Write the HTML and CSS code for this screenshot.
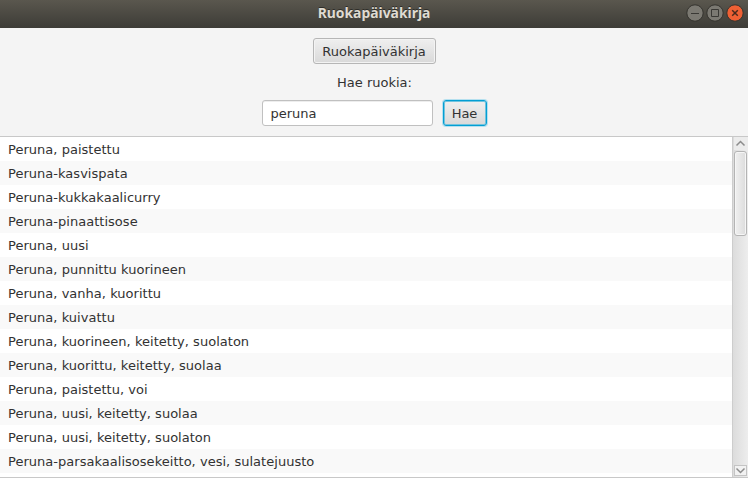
FILE: index.html
```html
<!DOCTYPE html>
<html lang="fi">
<head>
<meta charset="utf-8">
<title>Ruokapäiväkirja</title>
<link rel="stylesheet" href="styles.css">
</head>
<body>
<div class="window">
  <header class="titlebar">
    <h1 class="title">Ruokapäiväkirja</h1>
    <div class="controls">
      <svg class="control" viewBox="0 0 18 18"><circle class="disc" cx="9" cy="9" r="8.2"/><path class="glyph" d="M5 9.5h8"/></svg>
      <svg class="control" viewBox="0 0 18 18"><circle class="disc" cx="9" cy="9" r="8.2"/><path class="glyph" d="M5.5 5.5h7v7h-7z"/></svg>
      <svg class="control" viewBox="0 0 18 18"><circle class="disc disc-close" cx="9" cy="9" r="8.2"/><path class="glyph glyph-close" d="M6.2 6.2l5.6 5.6M11.8 6.2l-5.6 5.6"/></svg>
    </div>
  </header>
  <section class="search">
    <button class="button diary">Ruokapäiväkirja</button>
    <label class="label" for="query">Hae ruokia:</label>
    <div class="search-row">
      <input class="field" id="query" type="text" value="peruna">
      <button class="button focused">Hae</button>
    </div>
  </section>
  <main class="list">
    <ul class="rows">
      <li>Peruna, paistettu</li>
      <li>Peruna-kasvispata</li>
      <li>Peruna-kukkakaalicurry</li>
      <li>Peruna-pinaattisose</li>
      <li>Peruna, uusi</li>
      <li>Peruna, punnittu kuorineen</li>
      <li>Peruna, vanha, kuorittu</li>
      <li>Peruna, kuivattu</li>
      <li>Peruna, kuorineen, keitetty, suolaton</li>
      <li>Peruna, kuorittu, keitetty, suolaa</li>
      <li>Peruna, paistettu, voi</li>
      <li>Peruna, uusi, keitetty, suolaa</li>
      <li>Peruna, uusi, keitetty, suolaton</li>
      <li>Peruna-parsakaalisosekeitto, vesi, sulatejuusto</li>
    </ul>
    <div class="scrollbar">
      <svg class="arrow" viewBox="0 0 13 13"><path d="M2.5 8.5l4-4 4 4"/></svg>
      <div class="thumb"></div>
      <svg class="arrow arrow-down" viewBox="0 0 13 11"><path d="M2.5 3.5l4 4 4-4"/></svg>
    </div>
  </main>
</div>
</body>
</html>
```
FILE: styles.css
```css
* { box-sizing: border-box; }
body {
  margin: 0;
  font: 13px "DejaVu Sans", sans-serif;
  color: #323232;
  background: #f4f4f4;
}
.window {
  width: 748px;
  height: 478px;
  display: flex;
  flex-direction: column;
  overflow: hidden;
}
.titlebar {
  flex: 0 0 28px;
  display: grid;
  grid-template-columns: 1fr auto 1fr;
  align-items: center;
  padding-right: 4px;
  padding-left: 4px;
  background: linear-gradient(#5a574e, #3d3c37);
}
.title {
  grid-column: 2;
  margin: 0;
  padding-bottom: 2px;
  font: bold 13.9px/24px "Noto Sans", sans-serif;
  color: #dfdbd2;
  text-shadow: 0 -1px #2e2d29;
}
.controls {
  display: flex;
  justify-content: flex-end;
  gap: 2px;
  margin-top: -2px;
}
.control { width: 18px; height: 18px; }
.disc { fill: #7b7972; stroke: #34332e; stroke-width: 1; }
.disc-close { fill: #ee6034; }
.glyph { fill: none; stroke: #3a3935; stroke-width: 1; }
.glyph-close { stroke: #4a2a1c; stroke-width: 1.5; }
.search {
  flex: 0 0 108px;
  display: flex;
  flex-direction: column;
  align-items: center;
  padding-top: 10px;
}
.button {
  height: 26px;
  padding: 0 8px;
  border: 1px solid #b6b6b6;
  border-radius: 3px;
  background: linear-gradient(#efefef, #d9d9d9);
  box-shadow: inset 0 0 0 1px #f3f3f3;
  font: inherit;
  color: inherit;
}
.diary { width: 123px; padding: 0; }
.label { height: 16px; margin: 10px 0; padding-left: 1px; line-height: 18px; }
.search-row { display: flex; gap: 10px; }
.field {
  width: 171px;
  height: 26px;
  padding: 0 8px;
  border: 1px solid #c0c0c0;
  border-radius: 3px;
  background: #fff;
  font: inherit;
  color: inherit;
  outline: none;
  box-shadow: inset 0 1px #ededed;
}
.focused {
  width: 44px;
  padding: 0;
  border-color: #039ed3;
  box-shadow: 0 0 0 1px #b5e0ef, inset 0 0 0 1px #70c4df;
}
.list {
  flex: 1;
  min-height: 0;
  display: flex;
  border: solid #c8c8c8;
  border-width: 1px 0;
  background: #fff;
}
.rows { flex: 1; margin: 0; padding: 0; list-style: none; }
.rows li {
  height: 24px;
  padding-left: 8px;
  line-height: 26px;
  letter-spacing: 0.025px;
}
.rows li:nth-child(even) { background: #f9f9f9; }
.scrollbar {
  width: 16px;
  display: flex;
  flex-direction: column;
  align-items: center;
  border-left: 1px solid #cdcdcd;
  background: linear-gradient(to right, #dcdcdc, #ededed);
}
.arrow { width: 13px; height: 13px; margin-bottom: 1px; background: #ececec; }
.arrow path { fill: none; stroke: #8c8c8c; stroke-width: 1.5; }
.arrow-down {
  height: 11px;
  margin: auto 0 1px;
  background: #f2f2f2;
  outline: 1px solid #c4c4c4;
  outline-offset: -1px;
}
.thumb {
  width: 13px;
  height: 85px;
  border: 1px solid #b4b4b4;
  border-radius: 3px;
  background: linear-gradient(to right, #f0f0f0, #dcdcdc);
  box-shadow: inset 0 0 0 1px #f6f6f6;
}
```
